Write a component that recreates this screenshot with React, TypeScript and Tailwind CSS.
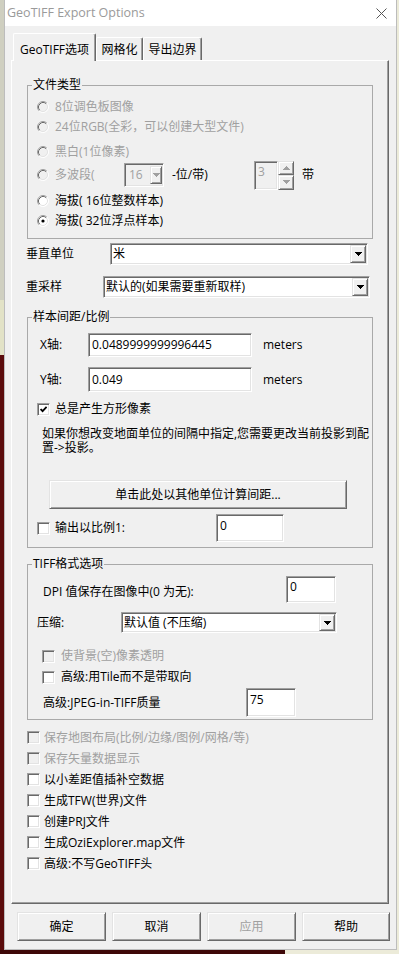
import React from "react";

const raised =
  "border border-t-[#e3e3e3] border-l-[#e3e3e3] border-r-[#696969] border-b-[#696969] shadow-[inset_1px_1px_0_#ffffff,inset_-1px_-1px_0_#a0a0a0] bg-[#f0f0f0]";
const sunken =
  "border border-t-[#a0a0a0] border-l-[#a0a0a0] border-r-white border-b-white shadow-[inset_1px_1px_0_#696969,inset_-1px_-1px_0_#e3e3e3]";

function Tri({ up = false, color = "#000" }: { up?: boolean; color?: string }) {
  return (
    <svg width="7" height="4" viewBox="0 0 7 4" shapeRendering="crispEdges" className="shrink-0">
      <path d={up ? "M3.5 0L7 4H0Z" : "M0 0H7L3.5 4Z"} fill={color} />
    </svg>
  );
}

function RadioIcon({ checked = false, disabled = false }: { checked?: boolean; disabled?: boolean }) {
  return (
    <svg width="12" height="12" viewBox="0 0 12 12" className="shrink-0">
      <circle cx="6" cy="6" r="5.5" fill={disabled ? "#f0f0f0" : "#ffffff"} />
      <path d="M2.11 9.89A5.5 5.5 0 0 1 9.89 2.11" fill="none" stroke="#a0a0a0" />
      <path d="M9.89 2.11A5.5 5.5 0 0 1 2.11 9.89" fill="none" stroke="#ffffff" />
      <path d="M2.82 9.18A4.5 4.5 0 0 1 9.18 2.82" fill="none" stroke="#696969" />
      <path d="M9.18 2.82A4.5 4.5 0 0 1 2.82 9.18" fill="none" stroke="#e3e3e3" />
      {checked && <circle cx="6" cy="6" r="1.6" fill="#000" />}
    </svg>
  );
}

function Radio({
  checked = false,
  disabled = false,
  className = "",
  children,
}: {
  checked?: boolean;
  disabled?: boolean;
  className?: string;
  children: React.ReactNode;
}) {
  return (
    <div className={`flex items-center h-[20px] ${className}`}>
      <RadioIcon checked={checked} disabled={disabled} />
      <span className={`ml-[6px] whitespace-nowrap ${disabled ? "text-[#a0a0a0]" : "text-black"}`}>{children}</span>
    </div>
  );
}

function Check({ checked = false, disabled = false }: { checked?: boolean; disabled?: boolean }) {
  return (
    <span
      className={`w-[13px] h-[13px] shrink-0 flex items-center justify-center ${sunken} ${
        disabled ? "bg-[#f0f0f0]" : "bg-white"
      }`}
    >
      {checked && (
        <svg width="7" height="7" viewBox="0 0 7 7">
          <path d="M0.6 3 L2.6 5.2 L6.6 0.8" fill="none" stroke="#000" strokeWidth="1.8" />
        </svg>
      )}
    </span>
  );
}

function Combo({ className = "", children }: { className?: string; children: React.ReactNode }) {
  return (
    <div className={`${sunken} bg-white flex items-stretch shrink-0 ${className}`}>
      <span className="flex-1 pl-[2px] flex items-center whitespace-nowrap">{children}</span>
      <span className={`w-[16px] m-[1px] ${raised} flex items-center justify-center`}>
        <Tri />
      </span>
    </div>
  );
}

function Group({ title, className = "", children }: { title: string; className?: string; children: React.ReactNode }) {
  return (
    <fieldset className={`border border-[#a9a9a9] ${className}`}>
      <legend className="ml-[4px] px-[1px] leading-[14px]">{title}</legend>
      {children}
    </fieldset>
  );
}

function Window() {
  const bottomChecks: [string, boolean][] = [
    ["保存地图布局(比例/边缘/图例/网格/等)", true],
    ["保存矢量数据显示", true],
    ["以小差距值插补空数据", false],
    ["生成TFW(世界)文件", false],
    ["创建PRJ文件", false],
    ["生成OziExplorer.map文件", false],
    ["高级:不写GeoTIFF头", false],
  ];
  return (
    <div className="w-[393px] h-[950px] flex flex-col bg-[#f0f0f0] border-x border-b border-[#bcbcbc]">
      {/* title bar */}
      <div className="h-[26px] bg-white flex items-center justify-between pl-[2px] pr-[9px]">
        <span className="text-[12.5px] text-[#9a9a9a]">GeoTIFF Export Options</span>
        <svg width="11" height="11" viewBox="0 0 11 11">
          <path d="M0.5 0.5L10.5 10.5M10.5 0.5L0.5 10.5" stroke="#555" strokeWidth="1" />
        </svg>
      </div>

      {/* tabs */}
      <div className="pt-[7px] pl-[8px] h-[34px] flex items-end">
        <div className="relative z-10 -mb-[1px] h-[28px] w-[83px] bg-[#f0f0f0] border-t border-l border-white border-r border-r-[#696969] rounded-t-[2px] shadow-[inset_-1px_0_0_#a0a0a0] pt-[9px] text-center whitespace-nowrap">
          GeoTIFF选项
        </div>
        <div className="h-[23px] w-[47px] border-t border-l border-white border-r border-r-[#696969] rounded-t-[2px] shadow-[inset_-1px_0_0_#a0a0a0] pt-[5px] text-center whitespace-nowrap">
          网格化
        </div>
        <div className="h-[23px] w-[59px] border-t border-l border-white border-r border-r-[#696969] rounded-t-[2px] shadow-[inset_-1px_0_0_#a0a0a0] pt-[5px] text-center whitespace-nowrap">
          导出边界
        </div>
      </div>

      {/* panel */}
      <div className="ml-[6px] w-[378px] h-[844px] border border-t-white border-l-white border-r-[#696969] border-b-[#696969] shadow-[inset_-1px_-1px_0_#a0a0a0] px-[15px] pt-[17px]">
        <Group title="文件类型">
          <div className="pl-[9px] pb-[7px]">
            <Radio disabled className="mt-[5px]">8位调色板图像</Radio>
            <Radio disabled>24位RGB(全彩，可以创建大型文件)</Radio>
            <Radio disabled className="mt-[5px]">黑白(1位像素)</Radio>
            <div className="flex items-center h-[20px] mt-[3px]">
              <RadioIcon disabled />
              <span className="ml-[6px] w-[69px] text-[#a0a0a0] whitespace-nowrap">多波段(</span>
              <div className={`w-[40px] h-[24px] ${sunken} bg-[#f0f0f0] flex items-stretch shrink-0`}>
                <span className="flex-1 pl-[4px] flex items-center text-[#a0a0a0]">16</span>
                <span className={`w-[12px] my-[2px] mr-[1px] ${raised} flex items-center justify-center`}>
                  <Tri color="#a0a0a0" />
                </span>
              </div>
              <span className="ml-[8px] w-[82px] whitespace-nowrap">-位/带)</span>
              <div className="flex h-[29px] shrink-0">
                <div className={`w-[24px] ${sunken} bg-[#f0f0f0] text-[#a0a0a0] pl-[3px] pt-[3px]`}>3</div>
                <div className="w-[16px] flex flex-col">
                  <span className={`flex-1 ${raised} flex items-center justify-center`}>
                    <Tri up color="#a0a0a0" />
                  </span>
                  <span className={`flex-1 ${raised} flex items-center justify-center`}>
                    <Tri color="#a0a0a0" />
                  </span>
                </div>
              </div>
              <span className="ml-[8px]">带</span>
            </div>
            <Radio className="mt-[6px]">海拔( 16位整数样本)</Radio>
            <Radio checked>海拔( 32位浮点样本)</Radio>
          </div>
        </Group>

        <div className="flex items-center mt-[4px] h-[22px]">
          <span className="-ml-[1px] w-[84px] whitespace-nowrap">垂直单位</span>
          <Combo className="w-[258px] h-[22px]">米</Combo>
        </div>
        <div className="flex items-center mt-[11px] h-[22px]">
          <span className="-ml-[1px] w-[77px] whitespace-nowrap">重采样</span>
          <Combo className="w-[267px] h-[22px]">默认的(如果需要重新取样)</Combo>
        </div>

        <Group title="样本间距/比例" className="mt-[12px]">
          <div className="pb-[5px]">
            <div className="flex items-center mt-[9px] h-[24px] pl-[12px]">
              <span className="w-[48px]">X轴:</span>
              <div className={`w-[164px] h-[24px] ${sunken} bg-white flex items-center pl-[3px]`}>0.0489999999996445</div>
              <span className="ml-[11px]">meters</span>
            </div>
            <div className="flex items-center mt-[10px] h-[25px] pl-[12px]">
              <span className="w-[48px]">Y轴:</span>
              <div className={`w-[164px] h-[25px] ${sunken} bg-white flex items-center pl-[3px]`}>0.049</div>
              <span className="ml-[11px]">meters</span>
            </div>
            <div className="flex items-center mt-[9px] h-[16px] pl-[9px]">
              <Check checked />
              <span className="ml-[5px]">总是产生方形像素</span>
            </div>
            <p className="mt-[10px] pl-[14px] leading-[14px]">
              如果你想改变地面单位的间隔中指定,您需要更改当前投影到配置-&gt;投影。
            </p>
            <div
              className={`mt-[25px] ml-[21px] w-[298px] h-[29px] ${raised} flex items-center justify-center whitespace-nowrap`}
            >
              单击此处以其他单位计算间距...
            </div>
            <div className="flex items-center mt-[5px] h-[28px] pl-[9px]">
              <Check />
              <span className="ml-[5px] w-[161px]">输出以比例1:</span>
              <div className={`w-[68px] h-[28px] ${sunken} bg-white pl-[3px] pt-[4px]`}>0</div>
            </div>
          </div>
        </Group>

        <Group title="TIFF格式选项" className="mt-[9px]">
          <div className="pb-[2px]">
            <div className="flex items-center mt-[5px] h-[27px] pl-[15px]">
              <span className="w-[243px] mt-[5px] whitespace-nowrap">DPI 值保存在图像中(0 为无):</span>
              <div className={`w-[50px] h-[27px] ${sunken} bg-white pl-[3px] pt-[3px]`}>0</div>
            </div>
            <div className="flex items-center mt-[9px] h-[21px] pl-[9px]">
              <span className="w-[84px]">压缩:</span>
              <Combo className="w-[216px] h-[21px]">默认值 (不压缩)</Combo>
            </div>
            <div className="flex items-center mt-[15px] h-[16px] pl-[14px]">
              <Check disabled />
              <span className="ml-[6px] text-[#a0a0a0]">使背景(空)像素透明</span>
            </div>
            <div className="flex items-center mt-[5px] h-[16px] pl-[14px]">
              <Check />
              <span className="ml-[6px]">高级:用Tile而不是带取向</span>
            </div>
            <div className="flex items-center mt-[3px] h-[29px] pl-[15px]">
              <span className="w-[203px] whitespace-nowrap">高级:JPEG-in-TIFF质量</span>
              <div className={`w-[50px] h-[29px] ${sunken} bg-white pl-[3px] pt-[4px]`}>75</div>
            </div>
          </div>
        </Group>

        <div className="mt-[7px] flex flex-col">
          {bottomChecks.map(([label, dis]) => (
            <div key={label} className="flex items-center h-[21px]">
              <Check disabled={dis} />
              <span className={`ml-[4px] whitespace-nowrap ${dis ? "text-[#a0a0a0]" : ""}`}>{label}</span>
            </div>
          ))}
        </div>
      </div>

      {/* buttons */}
      <div className="mt-[8px] ml-[12px] flex gap-[6px]">
        <div className={`w-[89px] h-[29px] ${raised} flex items-center justify-center`}>确定</div>
        <div className={`w-[89px] h-[29px] ${raised} flex items-center justify-center`}>取消</div>
        <div className={`w-[89px] h-[29px] ${raised} flex items-center justify-center text-[#a0a0a0]`}>应用</div>
        <div className={`w-[88px] h-[29px] ${raised} flex items-center justify-center`}>帮助</div>
      </div>
    </div>
  );
}

export default function App() {
  return (
    <div className="w-[399px] h-[954px] flex flex-col bg-[#ecebd9] overflow-hidden font-['Open_Sans','Noto_Sans_CJK_SC',sans-serif] text-[12px] leading-[14px] text-black">
      <div className="flex h-[950px]">
        <div className="w-[4px] flex flex-col">
          <div className="h-[300px] bg-[#cfcfc0]" />
          <div className="h-[55px] bg-[#e2e2c6]" />
          <div className="flex-1 bg-[#5a0b0b]" />
        </div>
        <Window />
        <div className="w-[2px] bg-[#ecebd9]" />
      </div>
      <div className="h-[4px] flex">
        <div className="w-[285px] bg-[#3e0808]" />
        <div className="flex-1 bg-[#ecebd9]" />
      </div>
    </div>
  );
}
